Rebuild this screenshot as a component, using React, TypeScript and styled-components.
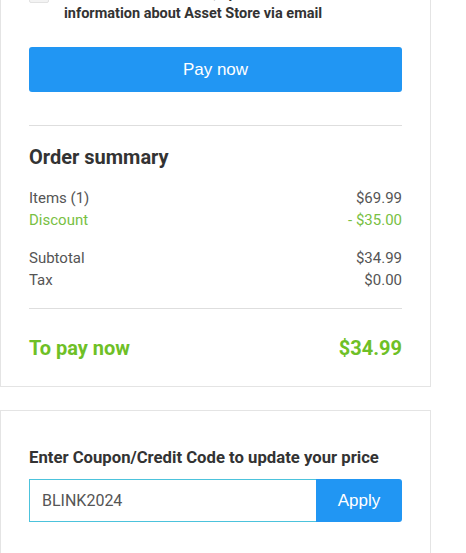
import React from "react";
import styled, { createGlobalStyle } from "styled-components";

const Global = createGlobalStyle`
  html, body { margin: 0; padding: 0; background: #fff; }
  body { font-family: Roboto, "Liberation Sans", Arial, sans-serif; color: #333; overflow: hidden; }
  * { box-sizing: border-box; }
`;

const Page = styled.div`
  display: flex;
  flex-direction: column;
  gap: 23px;
  width: 431px;
`;

const Card = styled.section<{ $top: number; $bottom: number; $shift?: number }>`
  border: 1px solid #e4e4e4;
  background: #fff;
  padding: ${(p) => p.$top}px 28px ${(p) => p.$bottom}px;
  margin-top: ${(p) => p.$shift ?? 0}px;
  display: flex;
  flex-direction: column;
`;

const ConsentRow = styled.label`
  display: flex;
  align-items: flex-start;
  gap: 15px;
`;

const Checkbox = styled.span`
  flex: none;
  width: 20px;
  height: 20px;
  border: 1px solid #e2e2e2;
  background: #f3f3f3;
  border-radius: 2px;
  margin-top: -1px;
`;

const ConsentText = styled.span`
  font-size: 14.5px;
  font-weight: 700;
  line-height: 20px;
  color: #333;
  white-space: nowrap;
`;

const PrimaryButton = styled.button`
  margin-top: 23px;
  height: 45px;
  border: none;
  border-radius: 3px;
  background: #2196f3;
  color: #fff;
  font-family: "Liberation Sans", Arial, sans-serif;
  font-size: 17px;
`;

const Divider = styled.hr<{ $gap: number }>`
  margin: ${(p) => p.$gap}px 0 0;
  border: none;
  border-top: 1px solid #dedede;
  height: 0;
`;

const Heading = styled.h2<{ $size: number; $gap: number; $line: number }>`
  margin: ${(p) => p.$gap}px 0 0;
  font-size: ${(p) => p.$size}px;
  line-height: ${(p) => p.$line}px;
  font-weight: 700;
  color: #333;
`;

const Lines = styled.div<{ $gap: number }>`
  margin-top: ${(p) => p.$gap}px;
  display: flex;
  flex-direction: column;
`;

const Line = styled.div<{ $tone?: "green" }>`
  display: flex;
  justify-content: space-between;
  font-size: 15px;
  line-height: 22px;
  color: ${(p) => (p.$tone === "green" ? "#78c043" : "#555")};
`;

const Total = styled.div`
  margin-top: 27px;
  display: flex;
  justify-content: space-between;
  font-size: 20px;
  line-height: 24px;
  font-weight: 700;
  color: #6ec026;
`;

const CouponRow = styled.div`
  margin-top: 10px;
  display: flex;
  height: 43px;
`;

const CouponInput = styled.input`
  flex: 1;
  min-width: 0;
  border: 1px solid #4cc3dc;
  border-right: none;
  padding: 0 12px;
  font-family: Roboto, sans-serif;
  font-size: 16px;
  color: #555;
  outline: none;
`;

const ApplyButton = styled.button`
  width: 86px;
  border: none;
  border-radius: 0 3px 3px 0;
  background: #2196f3;
  color: #fff;
  font-family: "Liberation Sans", Arial, sans-serif;
  font-size: 17px;
`;

export default function App() {
  return (
    <>
      <Global />
      <Page>
        <Card $top={0} $bottom={26} $shift={-17}>
          <ConsentRow>
            <Checkbox />
            <ConsentText>
              I want to receive offers, updates and other
              <br />
              information about Asset Store via email
            </ConsentText>
          </ConsentRow>
          <PrimaryButton>Pay now</PrimaryButton>
          <Divider $gap={33} />
          <Heading $size={20} $line={24} $gap={19}>Order summary</Heading>
          <Lines $gap={18}>
            <Line><span>Items (1)</span><span>$69.99</span></Line>
            <Line $tone="green"><span>Discount</span><span>- $35.00</span></Line>
          </Lines>
          <Lines $gap={16}>
            <Line><span>Subtotal</span><span>$34.99</span></Line>
            <Line><span>Tax</span><span>$0.00</span></Line>
          </Lines>
          <Divider $gap={17} />
          <Total><span>To pay now</span><span>$34.99</span></Total>
        </Card>
        <Card $top={36} $bottom={40}>
          <Heading $size={16.7} $line={22} $gap={0}>
            Enter Coupon/Credit Code to update your price
          </Heading>
          <CouponRow>
            <CouponInput defaultValue="BLINK2024" />
            <ApplyButton>Apply</ApplyButton>
          </CouponRow>
        </Card>
      </Page>
    </>
  );
}
